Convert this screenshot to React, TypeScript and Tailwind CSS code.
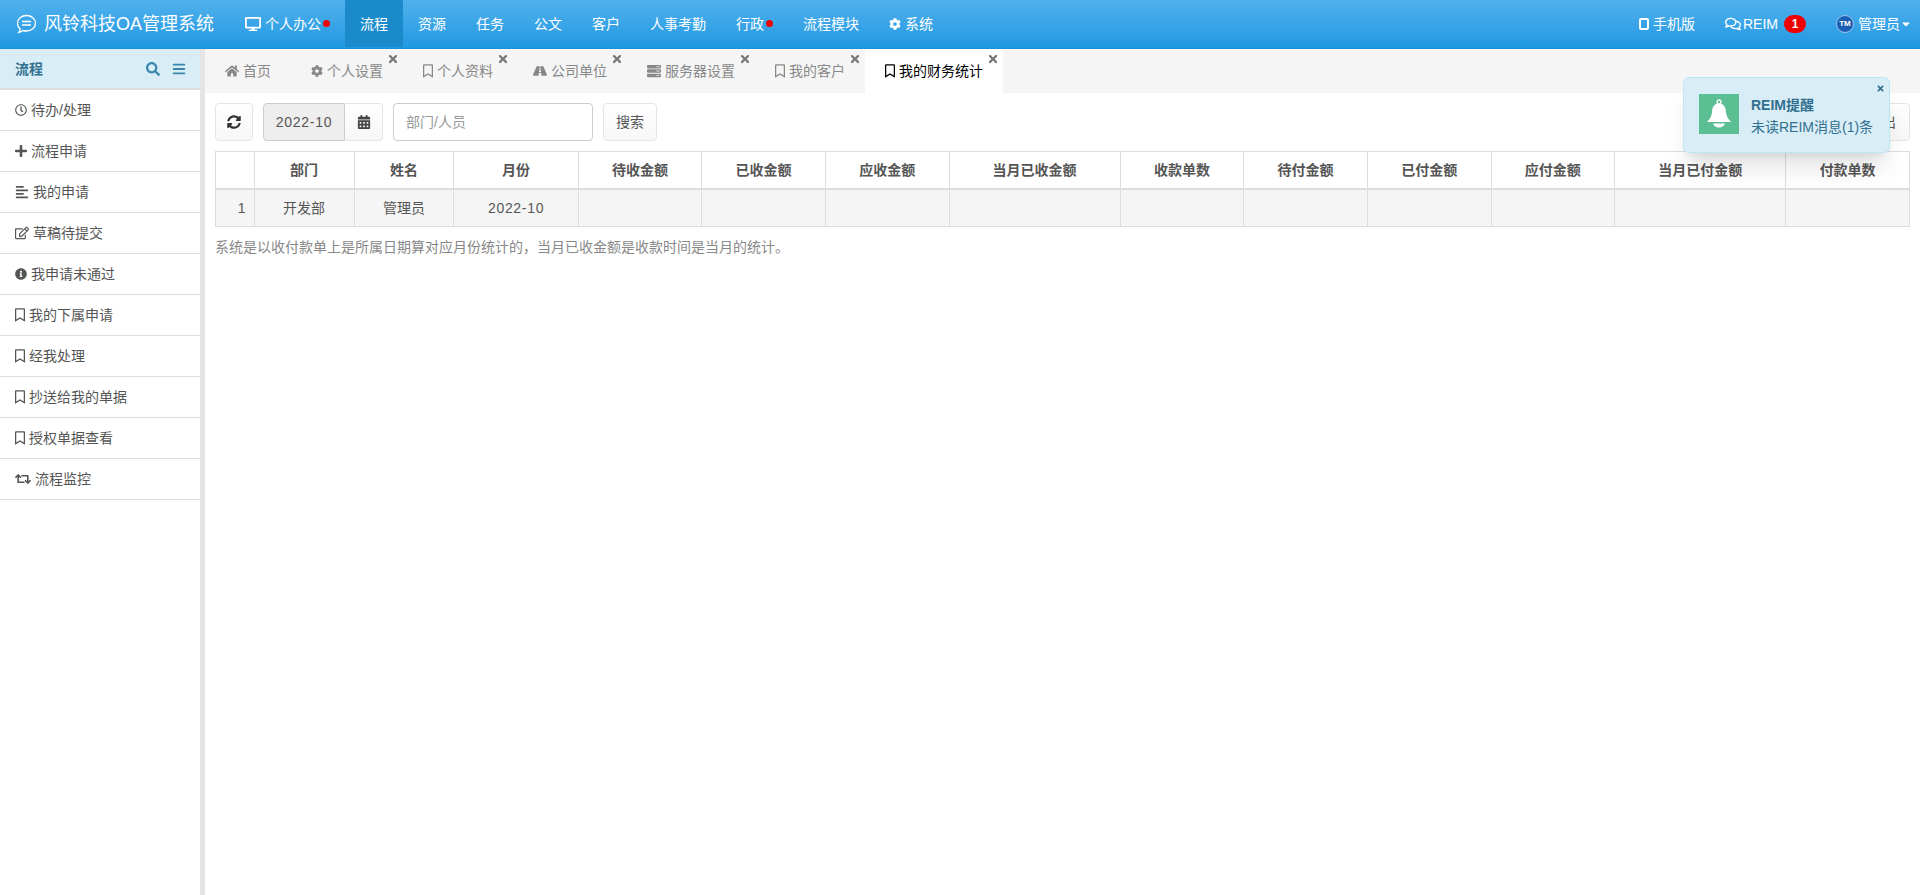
import React from "react";
import {
  FaHome, FaCog, FaRegBookmark, FaRoad, FaServer, FaTimes, FaSyncAlt, FaCalendarAlt, FaRegClock, FaPlus, FaAlignLeft,
  FaRegEdit, FaInfoCircle, FaRetweet, FaDesktop, FaRegComments, FaSearch, FaBars, FaCaretDown,
} from "react-icons/fa";

const nav = ["资源", "任务", "公文", "客户", "人事考勤"];

function Dot() {
  return <span className="-ml-0.5 h-1.75 w-1.75 rounded-full bg-[#f00000]" />;
}

function NavItem({ children, active }: { children: React.ReactNode; active?: boolean }) {
  return (
    <div className={`flex h-[47px] items-center gap-1 px-[15px] text-sm text-white ${active ? "bg-[#1a8acb]" : ""}`}>{children}</div>
  );
}

const bookmark = <FaRegBookmark className="w-2.5" />;

const tabs: { label: string; icon: React.ReactNode; close?: boolean; active?: boolean }[] = [
  { label: "首页", icon: <FaHome /> },
  { label: "个人设置", icon: <FaCog className="w-3" />, close: true },
  { label: "个人资料", icon: bookmark, close: true },
  { label: "公司单位", icon: <FaRoad />, close: true },
  { label: "服务器设置", icon: <FaServer />, close: true },
  { label: "我的客户", icon: bookmark, close: true },
  { label: "我的财务统计", icon: bookmark, close: true, active: true },
];

const side: { label: string; icon: React.ReactNode }[] = [
  { label: "待办/处理", icon: <FaRegClock className="w-3" /> },
  { label: "流程申请", icon: <FaPlus className="w-3" /> },
  { label: "我的申请", icon: <FaAlignLeft /> },
  { label: "草稿待提交", icon: <FaRegEdit /> },
  { label: "我申请未通过", icon: <FaInfoCircle className="w-3" /> },
  { label: "我的下属申请", icon: bookmark },
  { label: "经我处理", icon: bookmark },
  { label: "抄送给我的单据", icon: bookmark },
  { label: "授权单据查看", icon: bookmark },
  { label: "流程监控", icon: <FaRetweet className="w-4" /> },
];

const heads = ["", "部门", "姓名", "月份", "待收金额", "已收金额", "应收金额", "当月已收金额", "收款单数", "待付金额", "已付金额", "应付金额", "当月已付金额", "付款单数"];
const row = ["1", "开发部", "管理员", "2022-10", "", "", "", "", "", "", "", "", "", ""];

function Btn({ children, className = "" }: { children: React.ReactNode; className?: string }) {
  return (
    <button className={`flex h-9.5 items-center justify-center rounded border border-[#e5e5e5] bg-gradient-to-b from-white to-[#f7f7f7] text-sm text-[#555] ${className}`}>
      {children}
    </button>
  );
}

export default function App() {
  return (
    <div
      className="relative flex h-screen flex-col overflow-hidden bg-white text-sm text-[#555]"
      style={{ fontFamily: '"Liberation Sans", "Noto Sans CJK SC", sans-serif' }}
    >
      <header className="box-content flex h-12 flex-none items-start justify-between border-b border-[#1b8fd8] bg-gradient-to-b from-[#4fb1ec] to-[#1e98e2]">
        <div className="flex items-center">
          <div className="flex items-center gap-1.5 pl-3.5 pr-4 text-lg text-white">
            <svg viewBox="0 0 24 24" className="h-6 w-6" fill="none" stroke="currentColor" strokeWidth="1.3" strokeLinecap="round">
              <path d="M12.500 3.500c5 0 9 3.500 9 7.800s-4 7.700-9 7.700c-1.200 0-2.300-.2-3.400-.5-1.100.9-2.600 1.600-4.300 1.800.8-.8 1.300-2 1.400-3.300C4.500 15.600 3.500 13.600 3.500 11.300c0-4.300 4-7.800 9-7.800z" />
              <path d="M8.500 9.500h8M8.500 13h8" />
            </svg>
            <span>风铃科技OA管理系统</span>
          </div>
          <NavItem>
            <FaDesktop className="text-base" />
            <span>个人办公</span>
            <Dot />
          </NavItem>
          <NavItem active>流程</NavItem>
          {nav.map((n) => (
            <NavItem key={n}>{n}</NavItem>
          ))}
          <NavItem>
            <span>行政</span>
            <Dot />
          </NavItem>
          <NavItem>流程模块</NavItem>
          <NavItem>
            <FaCog className="w-3" />
            系统
          </NavItem>
        </div>
        <div className="flex h-[47px] items-center gap-7.5 pr-2 text-sm text-white">
          <div className="flex items-center gap-1">
            <span className="h-3 w-2.5 rounded-xs border-2 border-white" />
            手机版
          </div>
          <div className="flex items-center gap-0.5">
            <FaRegComments className="text-base" />
            REIM
            <span className="ml-1 flex h-4.5 w-5.5 items-center justify-center rounded-full bg-[#f00000] text-xs font-bold">1</span>
          </div>
          <div className="flex items-center">
            <span className="mr-1 flex h-4.5 w-4.5 items-center justify-center rounded-full border border-[#9cc4ee] bg-[#1a5fb4] text-[8px] font-bold">TM</span>
            管理员
            <FaCaretDown className="text-xs" />
          </div>
        </div>
      </header>

      <div className="flex min-h-0 flex-1">
        <aside className="w-[205px] flex-none border-r-[5px] border-[#e5e5e5]">
          <div className="flex h-10.25 items-center justify-between border-b-2 border-[#ddd] bg-[#d9edf7] pl-[15px] pr-3.5 font-bold text-[#31708f]">
            <span>流程</span>
            <div className="flex items-center gap-3 text-sm text-[#3a87ad]">
              <FaSearch />
              <FaBars />
            </div>
          </div>
          {side.map((s) => (
            <div key={s.label} className="flex h-[41px] items-center gap-1 border-b border-[#ddd] pl-[15px] text-[#555]">
              {s.icon}
              <span>{s.label}</span>
            </div>
          ))}
        </aside>

        <main className="min-w-0 flex-1">
          <div className="flex h-11 bg-[#f5f5f5]">
            {tabs.map((t) => (
              <div
                key={t.label}
                className={`relative flex items-center gap-1 px-5 ${t.active ? "bg-white text-black" : "text-[#888]"}`}
              >
                {t.icon}
                <span>{t.label}</span>
                {t.close && <FaTimes className="absolute right-1 top-1 text-xs text-[#777]" />}
              </div>
            ))}
          </div>

          <div className="px-2.5 pt-2.5">
            <div className="flex items-center justify-between">
              <div className="flex items-center gap-2.5">
                <Btn className="w-9.5">
                  <FaSyncAlt className="text-[#333]" />
                </Btn>
                <div className="flex h-9.5 items-center">
                  <div className="flex h-full w-20.5 items-center justify-center rounded-l border border-[#ccc] bg-[#eee] tracking-wider">2022-10</div>
                  <Btn className="w-9.5 rounded-l-none border-l-0">
                    <FaCalendarAlt className="text-[#444]" />
                  </Btn>
                </div>
                <div className="flex h-9.5 w-50 items-center rounded border border-[#ccc] px-3 text-[#999]">部门/人员</div>
                <Btn className="w-13.5">搜索</Btn>
              </div>
              <Btn className="w-14">导出</Btn>
            </div>

            <table className="mt-2.5 w-full border-collapse border border-[#ddd]">
              <thead>
                <tr>
                  {heads.map((h, i) => (
                    <th key={i} className="whitespace-nowrap border border-b-2 border-[#ddd] p-2 text-center font-bold text-[#555]">
                      {h}
                    </th>
                  ))}
                </tr>
              </thead>
              <tbody>
                <tr className="bg-[#f5f5f5]">
                  {row.map((c, i) => (
                    <td
                      key={i}
                      className={`whitespace-nowrap border border-[#ddd] py-2 ${i === 0 ? "pl-1.5 pr-2 text-right" : "px-2 text-center"} ${i === 3 ? "tracking-wider" : ""}`}
                    >
                      {c || "\u00a0"}
                    </td>
                  ))}
                </tr>
              </tbody>
            </table>
            <p className="mt-2.5 text-[#888]">系统是以收付款单上是所属日期算对应月份统计的，当月已收金额是收款时间是当月的统计。</p>
          </div>
        </main>
      </div>

      <div className="absolute right-[30px] top-[77px] flex w-[207px] items-start gap-3 rounded-md border border-[#bce8f1] bg-[#d9edf7] pb-3.5 pl-[15px] pt-4 text-[#31708f] shadow-xl">
        <div className="flex h-10 w-10 flex-none items-center justify-center bg-[#5cbf94] text-white">
          <svg viewBox="0 0 26 30" className="h-7.5 w-6.5" fill="currentColor">
            <circle cx="13" cy="3" r="2" fill="none" stroke="currentColor" strokeWidth="1.300" />
            <path d="M13 4.500c4 0 6.500 2.800 6.800 7 .3 4.500 1.500 8 5.200 11.500H1C4.700 19.500 5.900 16 6.200 11.500c.3-4.200 2.800-7 6.800-7z" />
            <path d="M7 24.500h12c-.8 2.600-3.200 4-6 4s-5.200-1.400-6-4z" />
          </svg>
        </div>
        <div className="whitespace-nowrap leading-5.5">
          <div className="font-bold">REIM提醒</div>
          <div>未读REIM消息(1)条</div>
        </div>
        <FaTimes className="absolute right-1 top-1.5 text-[9px]" />
      </div>
    </div>
  );
}
